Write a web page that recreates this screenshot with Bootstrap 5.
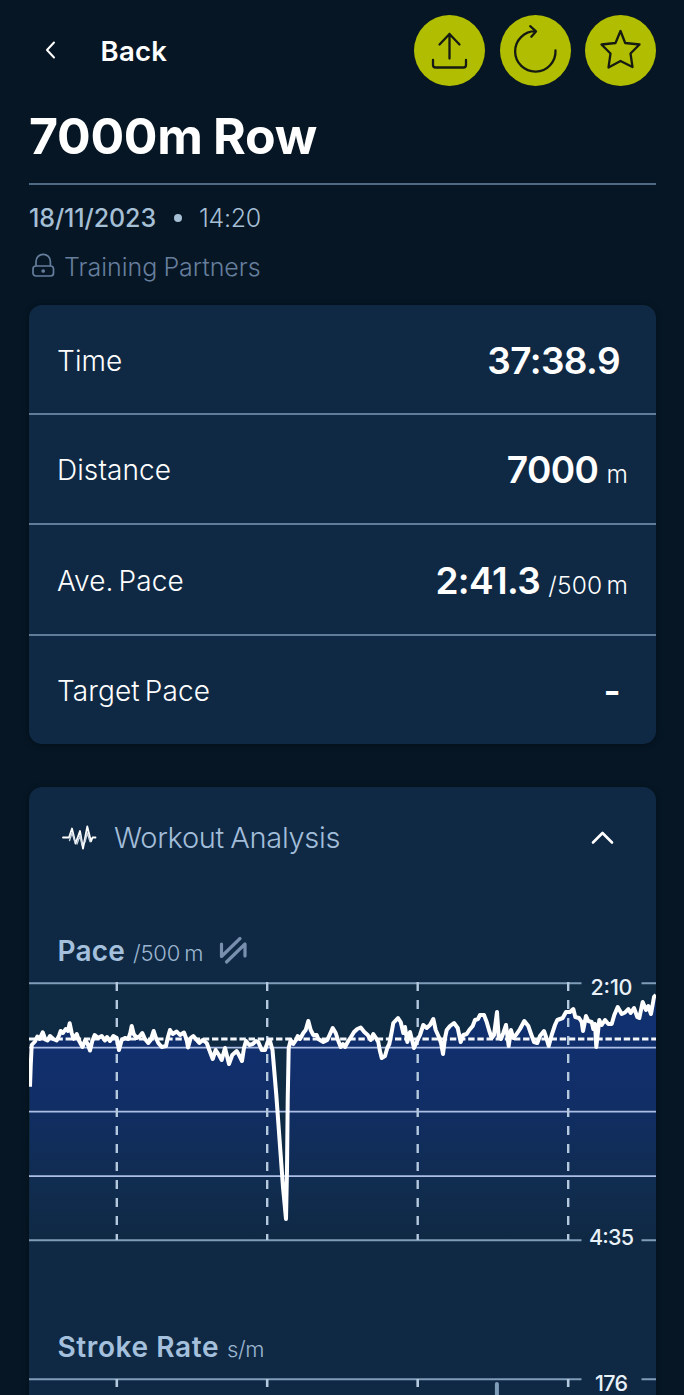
<!DOCTYPE html>
<html lang="en">
<head>
<meta charset="utf-8">
<meta name="viewport" content="width=device-width, initial-scale=1">
<title>7000m Row</title>
<link href="https://cdn.jsdelivr.net/npm/bootstrap@5.3.0/dist/css/bootstrap.min.css" rel="stylesheet">
<style>
  body { background: #061624; color: #fff; font-family: Inter, "Liberation Sans", sans-serif; height: 1395px; overflow: hidden; }
  .screen { padding: 15px 28px 0 29px; }
  .topbar { height: 71px; }
  .back-link { font-size: 27.5px; font-weight: 600; letter-spacing: .3px; line-height: 32px; color: #fff; margin-left: 16px; padding-top: 1px; }
  .back-link svg { margin-right: 44.5px; }
  .round-btn { width: 71px; height: 71px; background: #b1bd00; padding: 0; }
  .actions { gap: 14.5px; }
  .page-title { font-size: 50px; font-weight: 700; line-height: 60px; height: 60px; letter-spacing: -.3px; word-spacing: -1px; margin: 20px 0 0; padding-bottom: 17px; border-bottom: 2px solid #4f6a81; box-sizing: content-box; white-space: nowrap; }
  .stamp { font-size: 25px; line-height: 30px; margin-top: 18px; color: #a5bfd5; white-space: nowrap; }
  .stamp-day { font-weight: 500; letter-spacing: -.1px; }
  .stamp-dot { width: 8px; height: 8px; margin: 0 17px 0 18px; background: #a5bfd5; }
  .stamp-time { font-weight: 300; letter-spacing: -.3px; }
  .privacy { font-size: 25px; font-weight: 300; line-height: 30px; margin-top: 19px; margin-bottom: 23px; color: #667e9d; letter-spacing: 0; word-spacing: -1px; padding-left: 3px; white-space: nowrap; }
  .privacy svg { margin-right: 7px; }
  .panel { background: #0f2944; border-radius: 13px; box-shadow: 0 1px 6px rgba(0,0,0,.3); }
  .summary { height: 439px; }
  .metric { height: 110.4px; padding: 3px 28px 0 28px; border-bottom: 2px solid #5f7c98; }
  .metric:first-child { height: 109.8px; padding-top: 4px; }
  .metric:last-child { height: 108.4px; border-bottom: 0; padding-top: 2px; }
  .metric-name { font-size: 28px; font-weight: 300; letter-spacing: .1px; word-spacing: -3px; white-space: nowrap; }
  .metric-value { font-size: 37px; font-weight: 600; letter-spacing: -.6px; line-height: 46px; white-space: nowrap; }
  .metric-unit { font-size: 24.5px; font-weight: 300; letter-spacing: .2px; word-spacing: -3px; line-height: 1; margin-left: 8px; }
  .pad-end { padding-right: 8px; }
  .analysis { margin-top: 43px; height: 640px; }
  .analysis-head { height: 102px; padding: 0 42px 0 33px; }
  .analysis-title { font-size: 29px; font-weight: 300; letter-spacing: -.3px; word-spacing: -1.5px; color: #a2bdd9; margin-left: 17px; white-space: nowrap; }
  .series-title { height: 32px; line-height: 32px; font-size: 28px; font-weight: 600; letter-spacing: .2px; color: #a4c0dc; padding-left: 28.5px; white-space: nowrap; }
  .series-unit { font-size: 22px; font-weight: 300; letter-spacing: -.2px; word-spacing: -2px; line-height: 1; margin-left: 8px; color: #9cb6d0; }
  .pace-title { margin-top: 46px; }
  .pace-title svg { margin-left: 14px; }
  .stroke-title { margin-top: 81px; }
  .stroke-title .series-name { letter-spacing: .6px; }
  .stroke-title .series-unit { letter-spacing: -.4px; }
  .plot { display: block; }
  .axis-label { font-size: 21.5px; font-weight: 500; fill: #e9f1f8; }
</style>
</head>
<body>
<main class="screen">
  <header class="topbar d-flex align-items-center justify-content-between">
    <a href="#" class="back-link d-flex align-items-center text-decoration-none">
      <svg width="11" height="20" viewBox="0 0 11 20" fill="none" stroke="#fff" stroke-width="2" stroke-linecap="round" stroke-linejoin="round"><path d="M9 1.500 2 9l7 7.500"/></svg>
      <span class="back-text">Back</span>
    </a>
    <div class="actions d-flex">
      <button class="round-btn btn rounded-circle border-0" aria-label="Share">
        <svg class="d-block" width="71" height="71" viewBox="0 0 71 71" fill="none" stroke="#151b12" stroke-width="2.300" stroke-linecap="round" stroke-linejoin="round"><path d="M35.500 43.500V19M25.500 29.500l10-10.500 10 10.500M19 45v5q0 2.500 2.500 2.500h28q2.500 0 2.500-2.500v-5"/></svg>
      </button>
      <button class="round-btn btn rounded-circle border-0" aria-label="Repeat">
        <svg class="d-block" width="71" height="71" viewBox="0 0 71 71" fill="none" stroke="#151b12" stroke-width="2.300" stroke-linecap="round" stroke-linejoin="round"><path d="M55.500 35.500A20.200 20.200 0 1 1 35.500 16.200M30.200 11.200l5.800 5.200-4.700 5.300"/></svg>
      </button>
      <button class="round-btn btn rounded-circle border-0" aria-label="Favourite">
        <svg class="d-block" width="71" height="71" viewBox="0 0 71 71" fill="none" stroke="#151b12" stroke-width="2.300" stroke-linecap="round" stroke-linejoin="round"><path d="M35.500 16 40.200 28 54.500 29.500 45.500 38.500 47.500 52 35.500 46 23.500 52.500 25.500 38.500 16.500 29.500 30.500 28Z"/></svg>
      </button>
    </div>
  </header>

  <h1 class="page-title">7000m Row</h1>
  <div class="stamp d-flex align-items-center">
    <span class="stamp-day">18/11/2023</span><span class="stamp-dot rounded-circle"></span><span class="stamp-time">14:20</span>
  </div>
  <div class="privacy d-flex align-items-center">
    <svg class="flex-shrink-0" width="25" height="28" viewBox="0 0 25 28" fill="none" stroke="#667e9d" stroke-width="1.700"><rect x="1" y="13" width="20.500" height="10" rx="3"/><path d="M4 13V8.500a7.200 7.200 0 0 1 14.400 0V13"/><circle cx="11.200" cy="18" r="1" fill="#667e9d"/></svg>
    <span>Training Partners</span>
  </div>

  <section class="panel summary">
    <div class="metric d-flex align-items-center justify-content-between"><span class="metric-name">Time</span><span class="metric-value pad-end">37:38.9</span></div>
    <div class="metric d-flex align-items-center justify-content-between"><span class="metric-name">Distance</span><span class="metric-value">7000<span class="metric-unit">m</span></span></div>
    <div class="metric d-flex align-items-center justify-content-between"><span class="metric-name">Ave. Pace</span><span class="metric-value">2:41.3<span class="metric-unit">/500 m</span></span></div>
    <div class="metric d-flex align-items-center justify-content-between"><span class="metric-name">Target Pace</span><span class="metric-value pad-end">-</span></div>
  </section>

  <section class="panel analysis">
    <div class="analysis-head d-flex align-items-center justify-content-between">
      <div class="d-flex align-items-center">
        <svg width="35" height="27" viewBox="0 0 35 27" fill="none" stroke="#fff" stroke-width="1.800" stroke-linecap="round" stroke-linejoin="round"><path d="M1 12.500H7L10 3.500 13.500 18.500 18 6 21 23.500 25.300 1.500 29 16.500 30.500 12.500H33.500"/><path d="M7.500 15.500 10 8 13 17M15 19l3-8.500L20 20M23 17l2.300-9L28 16.500" stroke="#c8d3de" stroke-width="1.400"/></svg>
        <span class="analysis-title">Workout Analysis</span>
      </div>
      <svg width="23" height="16" viewBox="0 0 23 16" fill="none" stroke="#fff" stroke-width="2.600" stroke-linecap="round" stroke-linejoin="round"><path d="m2 12.500 9.500-9.500L21 12.500"/></svg>
    </div>

    <div class="series-title pace-title d-flex align-items-center">
      <div><span class="series-name">Pace</span><span class="series-unit">/500 m</span></div>
      <svg width="32" height="30" viewBox="0 0 32 30" fill="none" stroke="#7890ae" stroke-width="3.200" stroke-linecap="round" stroke-linejoin="round"><path d="M4.500 8v12.500L23 2.500M9.500 26 28 8v12"/></svg>
    </div>
    <svg class="plot" style="margin-top:3px" width="627" height="280" viewBox="29 970 627 280">
      <defs>
        <linearGradient id="paceFill" gradientUnits="userSpaceOnUse" x1="0" y1="1000" x2="0" y2="1240">
          <stop offset="0" stop-color="#103070"/><stop offset=".4" stop-color="#112e68"/><stop offset=".78" stop-color="#102c4f"/><stop offset="1" stop-color="#0f2944"/>
        </linearGradient>
      </defs>
      <rect x="29" y="984" width="627" height="256" fill="#0f2a43"/>
      <path id="paceArea" fill="url(#paceFill)"/>
      <g stroke="#7f9db8" stroke-width="1.900"><path d="M29 983.300H581.500M641.500 983.300H656M29 1240.300H581.500M641.500 1240.300H656"/></g>
      <path d="M29 1047.600H656M29 1111.700H656M29 1176.200H656" stroke="#aebfe6" stroke-width="1.700"/>
      <path d="M116.800 982V1240M267.200 982V1240M417.700 982V1240M568.200 982V1240" stroke="#b4c8de" stroke-width="2.400" stroke-dasharray="9 9"/>
      <path d="M29 1038.900H656" stroke="#f3f7fb" stroke-width="3" stroke-dasharray="6.400 2.750"/>
      <path id="paceLine" fill="none" stroke="#fff" stroke-width="4" stroke-linejoin="round"/>
      <text class="axis-label" x="590.500" y="994.500" textLength="42">2:10</text>
      <text class="axis-label" x="589" y="1244.500" textLength="45">4:35</text>
    </svg>

    <div class="series-title stroke-title"><span class="series-name">Stroke Rate</span><span class="series-unit">s/m</span></div>
    <svg class="plot" style="margin-top:7px" width="627" height="30" viewBox="29 1370 627 30">
      <path d="M29 1379.200H581.500M641.500 1379.200H656" stroke="#7f9db8" stroke-width="2"/>
      <path d="M116.800 1379V1387M267.200 1379V1387M417.700 1379V1387M568.200 1379V1387" stroke="#b4c8de" stroke-width="2.600"/>
      <path d="M496.900 1384V1400" stroke="#7f9db8" stroke-width="4" stroke-linecap="round"/>
      <text class="axis-label" x="595" y="1390.500" textLength="33">176</text>
    </svg>
  </section>
</main>
<script src="https://cdn.jsdelivr.net/npm/bootstrap@5.3.0/dist/js/bootstrap.bundle.min.js"></script>
<script>
  // pace samples as x,y pairs
  const pace = `30,1086.7 30.7,1066 31.7,1045 35,1041.5 37.3,1036.5 39.5,1039 42.7,1032.3 45.3,1039.5 47.5,1040.5 50,1036 53.3,1039 56.7,1040.5 59.3,1035 60.7,1031 63,1033 65.7,1029 68,1031 69.7,1023.3 71.7,1033 73.5,1039 76.7,1034 79,1040.5 82.5,1047 85.3,1040 87.7,1044 90,1050.5 92.3,1041 94.7,1035 98.3,1038 101.7,1036 105,1040.5 107,1037 110,1041 113.3,1036 116.7,1038 119,1050 121.7,1040 125,1038 128.3,1039 130.3,1033 131.7,1026 133.7,1034 136.7,1038 140,1036 142.3,1033 145,1039 148.3,1043 150.7,1040 153.7,1031 156,1038 158.3,1043 161.7,1047 166,1046 167.7,1038 170,1030 172.7,1034 176.7,1031.5 180,1035 184,1032.5 186.7,1040 188,1047.5 190.7,1038 193.3,1036 196.7,1040 199.3,1043 202.7,1040 206.7,1043 209.3,1050 212.7,1059 215.7,1050 219,1055 221.7,1060 225,1048 229,1064 232.3,1055 236.7,1051 239,1055 242,1061 244,1048 246,1041 249.3,1045 252.7,1044 256,1041 258.3,1042 261.7,1050 265,1050 267.7,1042 270,1041 272.5,1050 276.3,1095 283,1187 286,1219 287,1170 287.7,1100 288.7,1048 290.7,1040 293.3,1044 296,1040 297.7,1036 300,1039 303.3,1033 305.7,1030 308.3,1021 310.7,1030 313.3,1035 316.7,1035 318.3,1039 323.3,1042 327.3,1040 330,1034 332.7,1028 335.7,1033 338.3,1041 340.7,1047 343,1044 345,1047 348.3,1041 351,1037 354,1032 357.3,1029 360.7,1027.5 364.3,1032 367.7,1035 370.7,1040 373.3,1034 375.3,1037 378.3,1042 379.7,1050 381.7,1058 385,1056 387.3,1048 389.3,1044 391.7,1032 393.3,1023 398,1018 400.7,1022 403.3,1033 405,1027 407.3,1042 410,1032 412.3,1041 414,1048 416.7,1042 420,1035 423.3,1025 426.7,1028 430,1025 433.3,1019 435.7,1030 439.3,1038 441,1043 443,1054 445,1038 446.7,1030 450,1026 454,1023 457.7,1028 460.7,1042 463.3,1035 466.7,1034 469.3,1030 472.7,1026 475,1020 478,1019 480,1015 484,1015 486.7,1022 489.3,1031 491.7,1038 494,1035 497,1012 498.7,1037 501,1039 503.3,1033 506,1025 508.7,1046 511,1030 513.3,1038 516.7,1034 520,1029 524.3,1021 528.3,1026 530.7,1033 534,1042 537.3,1043 540,1036 544,1031 546.7,1039 548.7,1046 551.7,1035 555,1025 557.3,1020 562.7,1018 566,1012 570,1012 573.3,1009 575.3,1017 579,1018 581.7,1022 583,1031 586,1016 588.3,1021 591.7,1022 593.3,1029 595,1024 596.3,1047 599.3,1020 601.7,1025 605,1020 608.3,1024 611.7,1024 614.3,1015 617.7,1007 621.7,1014 625,1012.5 628.3,1009 630.7,1013 634,1008 637.3,1017 639.3,1018 642.7,1002 646,1010 648.3,1006 651,1014 654,997 656,995`;
  document.getElementById('paceLine').setAttribute('d', 'M' + pace);
  document.getElementById('paceArea').setAttribute('d', 'M' + pace + ' V1240 H30 Z');
</script>
</body>
</html>
